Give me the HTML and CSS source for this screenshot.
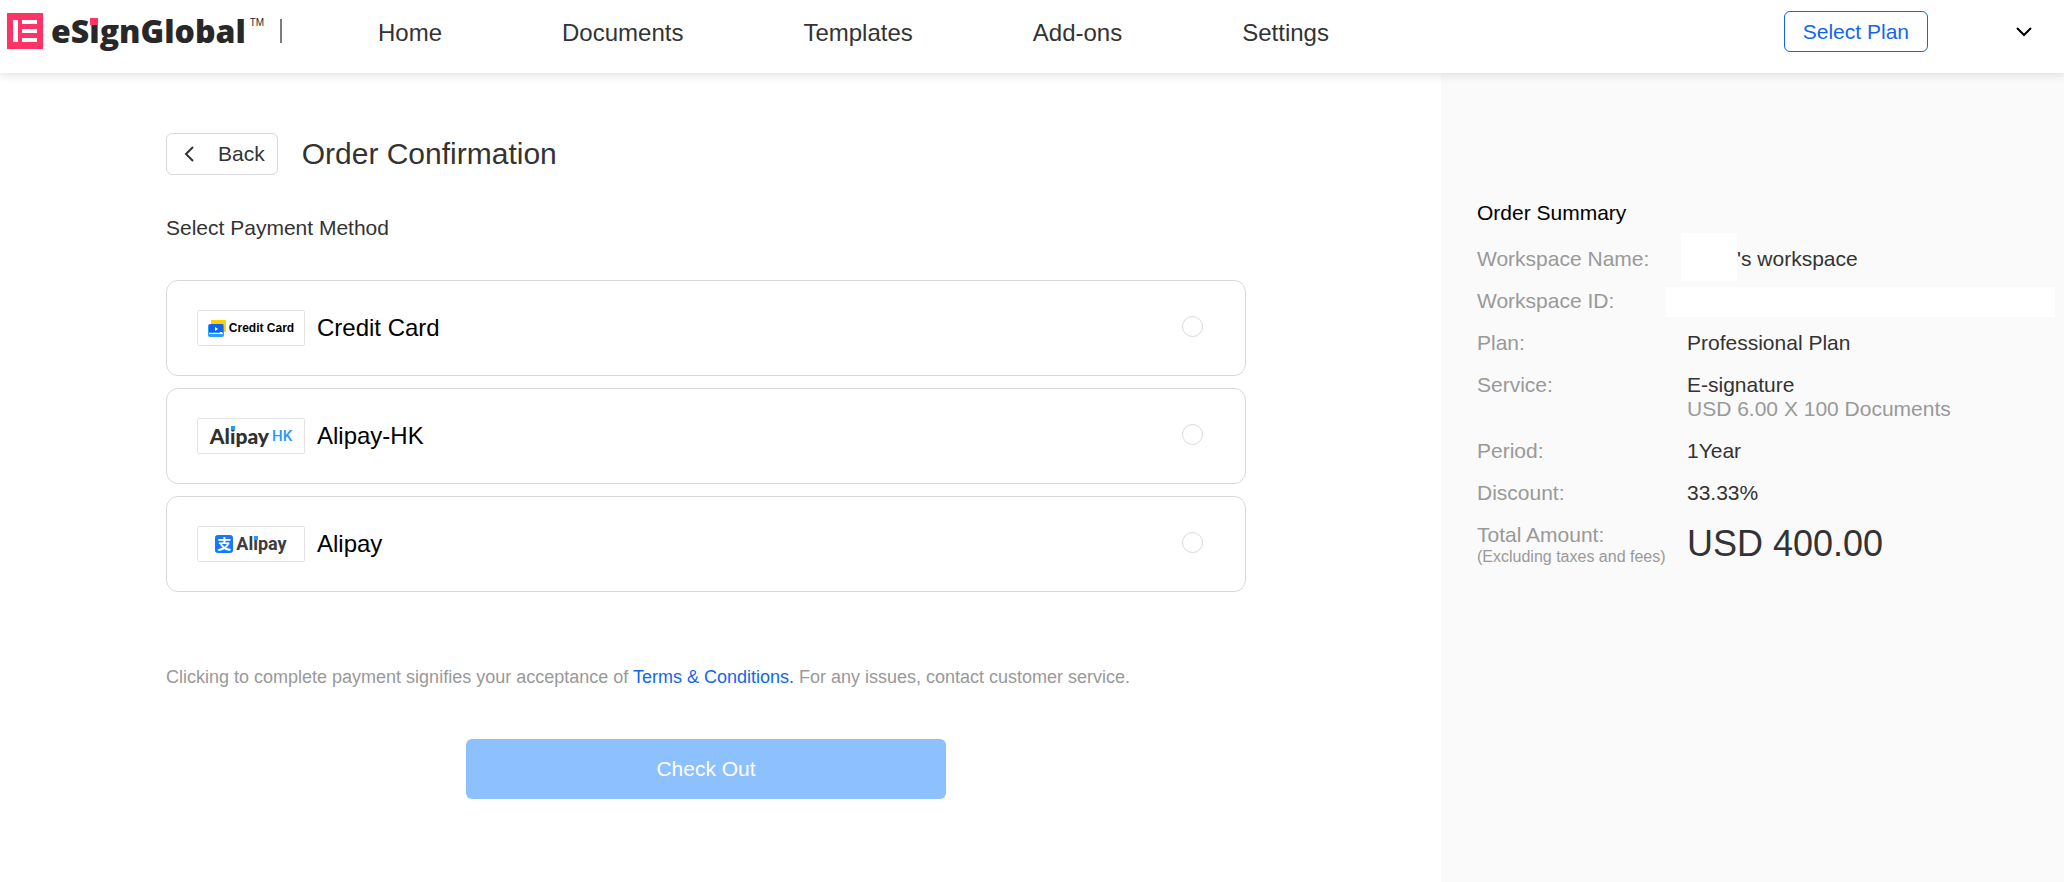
FILE: index.html
```html
<!DOCTYPE html>
<html lang="en">
<head>
<meta charset="utf-8">
<meta name="viewport" content="width=device-width, initial-scale=1">
<title>Order Confirmation</title>
<link rel="stylesheet" href="styles.css">
</head>
<body class="page">
<header class="header">
  <a class="brand" href="#">
    <svg class="brand-mark" viewBox="0 0 36 36" aria-hidden="true">
      <path fill="#ff3366" d="M0 0h36v36H0z"/>
      <path fill="#fff" d="M6 7h5v22H6zM15 7h15v4H15zM15 16h15v4H15zM15 25h15v4H15z"/>
    </svg>
    <span class="brand-name">eS<span class="dotted">i</span>gnGlobal</span>
    <span class="brand-tm">TM</span>
  </a>
  <span class="divider"></span>
  <nav class="nav">
    <a href="#">Home</a>
    <a href="#">Documents</a>
    <a href="#">Templates</a>
    <a href="#">Add-ons</a>
    <a href="#">Settings</a>
  </nav>
  <button class="plan-button" type="button">Select Plan</button>
  <button class="menu-button" type="button" aria-label="Account menu">
    <svg width="16" height="10" viewBox="0 0 16 10" fill="none" stroke="#000" stroke-width="2" aria-hidden="true"><path d="M1 1l7 7 7-7"/></svg>
  </button>
</header>
<div class="layout">
  <main class="main">
    <div class="title-row">
      <button class="back" type="button">
        <svg width="10" height="16" viewBox="0 0 10 16" fill="none" stroke="#333" stroke-width="2" aria-hidden="true"><path d="M9 1L2 8l7 7"/></svg>
        Back
      </button>
      <h1 class="title">Order Confirmation</h1>
    </div>
    <form class="form">
      <fieldset class="methods">
        <legend class="legend">Select Payment Method</legend>
        <label class="method">
          <span class="badge">
            <svg width="18" height="17" viewBox="0 0 18 17" aria-hidden="true">
              <rect x="3" width="15" height="12" rx="1" fill="#ffd000"/>
              <rect y="4" width="16" height="13" rx="2" fill="#2f9bff"/>
              <path fill="#1463e8" d="M3 4h12v8H1V5z"/>
              <path fill="#fff" d="M7 7l3 2-3 2zM1 13h14v1H1zM12 12h2v2h-2z"/>
            </svg>
            <span class="badge-card">Credit Card</span>
          </span>
          <span class="method-name">Credit Card</span>
          <input class="radio" type="radio" name="method">
        </label>
        <label class="method">
          <span class="badge">
            <span class="badge-hk">Al<span class="dotted dotted-blue">i</span>pay</span>
            <span class="badge-region">HK</span>
          </span>
          <span class="method-name">Alipay-HK</span>
          <input class="radio" type="radio" name="method">
        </label>
        <label class="method">
          <span class="badge">
            <span class="alipay-mark" lang="zh">支</span>
            <span class="badge-alipay">Al<span class="dotted dotted-blue">i</span>pay</span>
          </span>
          <span class="method-name">Alipay</span>
          <input class="radio" type="radio" name="method">
        </label>
      </fieldset>
      <p class="terms">Clicking to complete payment signifies your acceptance of <a href="#">Terms &amp; Conditions.</a> For any issues, contact customer service.</p>
      <button class="checkout" type="button">Check Out</button>
    </form>
  </main>
  <aside class="summary">
    <h2 class="summary-title">Order Summary</h2>
    <dl class="details">
      <dt>Workspace Name:</dt>
      <dd class="workspace"><span class="mask-name"></span>'s workspace</dd>
      <dt>Workspace ID:</dt>
      <dd class="workspace-id"><span class="mask-id"></span></dd>
      <dt>Plan:</dt>
      <dd>Professional Plan</dd>
      <dt>Service:</dt>
      <dd>E-signature<span class="unit">USD 6.00 X 100 Documents</span></dd>
      <dt>Period:</dt>
      <dd>1Year</dd>
      <dt>Discount:</dt>
      <dd>33.33%</dd>
      <dt>Total Amount:<small class="note">(Excluding taxes and fees)</small></dt>
      <dd class="total">USD 400.00</dd>
    </dl>
  </aside>
</div>
</body>
</html>
```

FILE: styles.css
```css
* {
  box-sizing: border-box;
}

.page {
  margin: 0;
  min-height: 100vh;
  display: flex;
  flex-direction: column;
  background: #fff;
  color: #333;
  font: 21px/24px "Liberation Sans", Arial, sans-serif;
}

button {
  font: inherit;
  cursor: pointer;
}

a {
  text-decoration: none;
}

/* Header */
.header {
  position: relative;
  display: flex;
  align-items: flex-start;
  height: 73px;
  padding: 11px 32px 0 7px;
  background: #fff;
  box-shadow: 0 2px 9px rgba(0, 0, 0, 0.12);
}

.brand {
  display: flex;
  width: 273px;
  padding-top: 2px;
  color: #282828;
}

.brand-mark {
  width: 36px;
  height: 36px;
  margin-right: 8px;
}

.brand-name {
  font: 800 32px/36px "Open Sans", "Noto Sans", sans-serif;
}

.brand-tm {
  margin-left: 4px;
  font-size: 10px;
  line-height: 20px;
}

.dotted {
  position: relative;
}

.dotted::before {
  content: "";
  position: absolute;
  top: 9px;
  left: 1px;
  width: 8px;
  height: 7px;
  background: #ff3366;
}

.divider {
  width: 2px;
  height: 24px;
  margin-top: 8px;
  background: #7d7d77;
}

.nav {
  display: flex;
  gap: 120px;
  margin: 10px auto 0 96px;
  font-size: 24px;
}

.nav a {
  color: #333;
}

.plan-button {
  height: 41px;
  padding: 0 18px;
  border: 1px solid #1265f0;
  border-radius: 6px;
  background: #fff;
  color: #1265f0;
}

.menu-button {
  display: flex;
  align-items: center;
  height: 41px;
  margin-left: 88px;
  padding: 0;
  border: 0;
  background: none;
}

/* Page columns */
.layout {
  flex: 1;
  display: flex;
}

.main {
  flex: 1;
  padding: 60px 195px 60px 166px;
}

.title-row {
  display: flex;
  align-items: center;
  gap: 24px;
}

.back {
  display: flex;
  align-items: center;
  gap: 24px;
  height: 42px;
  padding: 0 12px 0 17px;
  border: 1px solid #d9d9d9;
  border-radius: 6px;
  background: #fff;
  color: #333;
}

.title {
  margin: 0;
  font-size: 30px;
  line-height: 42px;
  font-weight: 400;
}

/* Payment methods */
.form {
  display: flex;
  flex-direction: column;
  margin-top: 41px;
}

.methods {
  display: flex;
  flex-direction: column;
  gap: 12px;
  min-width: 0;
  margin: 0;
  padding: 0;
  border: 0;
}

.legend {
  margin-bottom: 40px;
  padding: 0;
}

.method {
  display: flex;
  align-items: center;
  height: 96px;
  padding: 0 42px 0 30px;
  border: 1px solid #d9d9d9;
  border-radius: 12px;
  color: #000;
  font-size: 24px;
}

.badge {
  display: flex;
  align-items: center;
  justify-content: center;
  gap: 3px;
  width: 108px;
  height: 36px;
  border: 1px solid #e3e3e3;
  border-radius: 2px;
  white-space: nowrap;
}

.badge-card {
  font-size: 12px;
  font-weight: 700;
}

.badge-hk {
  color: #303030;
  font: 900 21px/24px Lato, sans-serif;
}

.badge-region {
  color: #2499ff;
  font: 500 15px/24px Roboto, sans-serif;
}

.badge-alipay {
  color: #3c3c41;
  font: 700 18px/24px Roboto, sans-serif;
}

.alipay-mark {
  width: 18px;
  height: 18px;
  border-radius: 3px;
  background: #1677ff;
  color: #fff;
  font: 700 14px/17px "Noto Sans CJK SC", sans-serif;
  text-align: center;
}

.dotted-blue::before {
  top: 3px;
  width: 4px;
  height: 4px;
  background: #2499ff;
}

.method-name {
  flex: 1;
  margin-left: 12px;
}

.radio {
  appearance: none;
  width: 21px;
  height: 21px;
  margin: 0 0 4px;
  border: 1px solid #d9d9d9;
  border-radius: 50%;
  background: #fff;
}

.radio:checked {
  border: 6px solid #1265f0;
}

.terms {
  margin: 73px 0 0;
  color: #999;
  font-size: 18px;
}

.terms a {
  color: #1265f0;
}

.checkout {
  align-self: center;
  width: 480px;
  max-width: 100%;
  height: 60px;
  margin-top: 50px;
  border: 0;
  border-radius: 6px;
  background: #8cc0ff;
  color: #fff;
}

/* Order summary */
.summary {
  width: 623px;
  flex: none;
  padding: 128px 9px 0 36px;
  background: #fafafa;
}

.summary-title {
  margin: 0 0 22px;
  color: #000;
  font-size: 21px;
  font-weight: 400;
}

.details {
  display: grid;
  grid-template-columns: 210px 1fr;
  row-gap: 18px;
  margin: 0;
}

.details dt {
  color: #999;
  white-space: nowrap;
}

.details dd {
  margin: 0;
}

.unit {
  display: block;
  color: #999;
}

.note {
  display: block;
  font-size: 16px;
  line-height: 20px;
}

.workspace,
.workspace-id {
  position: relative;
}

.details .workspace {
  padding-left: 50px;
}

.mask-name,
.mask-id {
  position: absolute;
  background: #fff;
}

.mask-name {
  top: -14px;
  left: -6px;
  width: 56px;
  height: 48px;
}

.mask-id {
  top: -2px;
  left: -21px;
  right: 0;
  height: 30px;
}

.details .total {
  font-size: 36px;
  line-height: 42px;
}
```
